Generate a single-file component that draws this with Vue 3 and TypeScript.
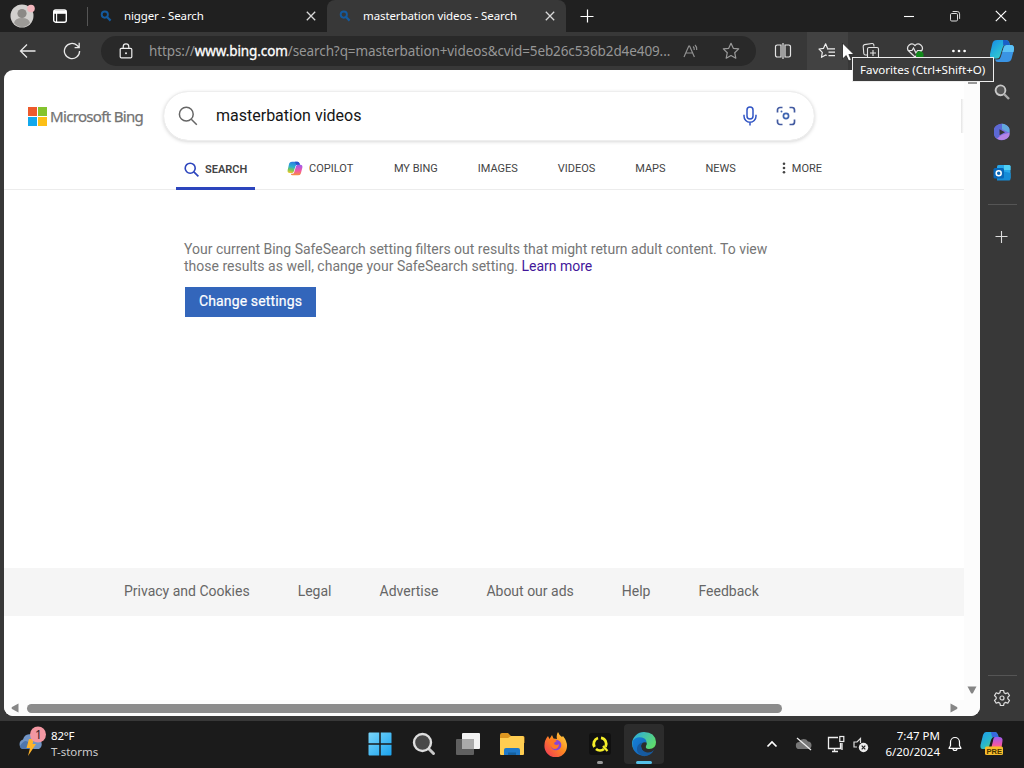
<script setup lang="ts">
interface NavItem { label: string }
const nav: NavItem[] = [
  { label: 'MY BING' },
  { label: 'IMAGES' },
  { label: 'VIDEOS' },
  { label: 'MAPS' },
  { label: 'NEWS' },
]
const footer: string[] = ['Privacy and Cookies', 'Legal', 'Advertise', 'About our ads', 'Help', 'Feedback']
</script>

<template>
  <div class="desktop">
    <svg width="0" height="0" class="defs">
      <defs>
        <linearGradient id="copA" x1="0" y1="0" x2="1" y2="1"><stop offset="0" stop-color="#1a9bf0" /><stop offset=".5" stop-color="#2bb8c8" /><stop offset="1" stop-color="#8bd93a" /></linearGradient>
        <linearGradient id="copL" x1=".5" y1="0" x2=".3" y2="1"><stop offset="0" stop-color="#2a7be0" /><stop offset=".45" stop-color="#2bb0d0" /><stop offset=".75" stop-color="#7cc850" /><stop offset="1" stop-color="#f0c830" /></linearGradient>
        <linearGradient id="copB" x1="0" y1="0" x2="0" y2="1"><stop offset="0" stop-color="#9a5cf0" /><stop offset=".55" stop-color="#f056a8" /><stop offset="1" stop-color="#f8913c" /></linearGradient>
        <linearGradient id="copC" x1="0" y1="0" x2="1" y2="1"><stop offset="0" stop-color="#1688e8" /><stop offset=".5" stop-color="#28b8d8" /><stop offset="1" stop-color="#4ad8b8" /></linearGradient>
        <linearGradient id="winG" x1="0" y1="0" x2="1" y2="1"><stop offset="0" stop-color="#7ad6fb" /><stop offset="1" stop-color="#1aa3ee" /></linearGradient>
        <linearGradient id="foxG" x1="1" y1="0" x2="0" y2="1"><stop offset="0" stop-color="#ffe14a" /><stop offset=".45" stop-color="#ff8a20" /><stop offset="1" stop-color="#f0305e" /></linearGradient>
        <linearGradient id="edgeG" x1="0" y1="0" x2="1" y2=".6"><stop offset="0" stop-color="#28a8e8" /><stop offset="1" stop-color="#5fdc6c" /></linearGradient>
        <linearGradient id="edgeB" x1="0" y1="0" x2="1" y2="1"><stop offset="0" stop-color="#1580d8" /><stop offset="1" stop-color="#1560b0" /></linearGradient>
      </defs>
    </svg>

    <header class="titlebar">
      <svg class="avatar" width="26" height="26" viewBox="0 0 26 26"><circle cx="13" cy="13" r="11.5" fill="#d2d0ce" /><circle cx="13" cy="10.5" r="4.6" fill="#8b8986" /><path d="M5 20q1-5 8-5t8 5q-3 4-8 4t-8-4z" fill="#9c9a97" /><circle cx="22" cy="5.500" r="3.800" fill="#f3b6bd" /></svg>
      <svg class="tabmenu" width="16" height="16" viewBox="0 0 16 16"><rect x="1.700" y="2" width="12.600" height="12.200" rx="2" fill="none" stroke="#fff" stroke-width="1.400" /><path d="M2 2.600h12v3.200H2z" fill="#fff" /><path d="M4.600 5v9" stroke="#fff" stroke-width="1.100" /></svg>
      <i class="divider"></i>
      <div class="tab first">
        <svg width="12" height="12" viewBox="0 0 12 12"><circle cx="4.800" cy="4.600" r="3.100" fill="none" stroke="#145a9e" stroke-width="1.900" /><path d="M7 7l3.600 3.600" stroke="#145a9e" stroke-width="2.200" /></svg>
        <span class="tabtext">nigger - Search</span>
        <svg width="10" height="10" viewBox="0 0 10 10"><path d="M.8.8l8.400 8.400M9.200.8L.8 9.200" stroke="#d8d8d8" stroke-width="1.300" /></svg>
      </div>
      <div class="tab active">
        <svg width="12" height="12" viewBox="0 0 12 12"><circle cx="4.800" cy="4.600" r="3.100" fill="none" stroke="#145a9e" stroke-width="1.900" /><path d="M7 7l3.600 3.600" stroke="#145a9e" stroke-width="2.200" /></svg>
        <span class="tabtext t2">masterbation videos - Search</span>
        <svg width="10" height="10" viewBox="0 0 10 10"><path d="M.8.8l8.400 8.400M9.200.8L.8 9.200" stroke="#d8d8d8" stroke-width="1.300" /></svg>
      </div>
      <svg class="newtab" width="14" height="14" viewBox="0 0 14 14"><path d="M7.500 .5v13M.5 7.500h13" stroke="#fff" stroke-width="1.200" /></svg>
      <div class="winbtns">
        <svg width="12" height="12" viewBox="0 0 12 12"><path d="M1 6.500h10" stroke="#fff" stroke-width="1.100" /></svg>
        <svg width="12" height="12" viewBox="0 0 12 12"><rect x="1.500" y="3.500" width="7" height="7.500" rx="1.200" fill="none" stroke="#ddd" /><path d="M3.600 1.500h4.600a2.400 2.400 0 0 1 2.400 2.400v5" fill="none" stroke="#ddd" /></svg>
        <svg width="12" height="12" viewBox="0 0 12 12"><path d="M.8.8l10.400 10.400M11.200.8L.8 11.200" stroke="#fff" stroke-width="1.200" /></svg>
      </div>
    </header>

    <div class="toolbar">
      <svg class="back" width="18" height="16" viewBox="0 0 18 16"><path d="M16.500 8H2M8 1.500L1.500 8 8 14.500" fill="none" stroke="#e8e8e8" stroke-width="1.300" /></svg>
      <svg class="reload" width="18" height="18" viewBox="0 0 18 18"><path d="M16.600 9A7.600 7.600 0 1 1 14.200 3.500L16 5.300M16.200.8v4.800h-4.600" fill="none" stroke="#e8e8e8" stroke-width="1.300" /></svg>
      <div class="address">
        <svg class="lock" width="14" height="16" viewBox="0 0 14 16"><rect x="1.200" y="5.300" width="11.600" height="9.600" rx="1.200" fill="none" stroke="#eee" stroke-width="1.200" /><path d="M4.200 5V3.700a2.800 2.800 0 0 1 5.600 0V5" fill="none" stroke="#eee" stroke-width="1.200" /><circle cx="7" cy="10.200" r="1" fill="#eee" /></svg>
        <span class="url">https://<b>www.bing.com</b>/search?q=masterbation+videos&amp;cvid=5eb26c536b2d4e409...</span>
        <svg class="read" width="17" height="16" viewBox="0 0 17 16"><path d="M1 14L5.800 3h.8l4.800 11M2.700 10h7" fill="none" stroke="#919191" stroke-width="1.200" /><path d="M10 3.500q1.500 1 1.200 3.500M12 2q2.100 1.800 1.700 5" fill="none" stroke="#919191" stroke-width="1.200" /></svg>
        <svg class="star" width="18" height="18" viewBox="0 0 18 18"><path d="M9 1.300l2.300 5 5.400.6-4 3.800 1.100 5.500L9 13.500l-4.800 2.700 1.100-5.500-4-3.800 5.400-.6z" fill="none" stroke="#9a9a9a" stroke-width="1.200" stroke-linejoin="round" /></svg>
      </div>
      <div class="tools">
        <span><svg width="18" height="18" viewBox="0 0 18 18"><path d="M7 3H3.200A1.700 1.700 0 0 0 1.500 4.700v8.600A1.700 1.700 0 0 0 3.200 15H7zM11 3h3.800a1.700 1.700 0 0 1 1.700 1.700v8.600a1.700 1.700 0 0 1-1.700 1.700H11zM9 1v16" fill="none" stroke="#e4e4e4" stroke-width="1.200" /></svg></span>
        <span class="hover"><svg width="18" height="18" viewBox="0 0 18 18"><path d="M9.600 6.600L7.600 1.800 5.400 6.400 1 7l3.300 3.300-.8 5 4.200-2.400 1 .7" fill="none" stroke="#eee" stroke-width="1.200" stroke-linejoin="round" /><path d="M9 6.800h8M10.500 10.200h6.500M10.500 13.600h6.500" stroke="#eee" stroke-width="1.200" /></svg></span>
        <span><svg width="18" height="18" viewBox="0 0 18 18"><path d="M5 13H3.500Q2 13 1.800 11.500L1.200 4.500Q1 3 2.500 2.600L10 1.500q1.500-.2 1.800 1.200L12 4.500" fill="none" stroke="#e4e4e4" stroke-width="1.100" /><rect x="5.500" y="5.500" width="11" height="11" rx="1.500" fill="none" stroke="#e4e4e4" stroke-width="1.100" /><path d="M11 8v6M8 11h6" stroke="#e4e4e4" stroke-width="1.100" /></svg></span>
        <span><svg width="18" height="18" viewBox="0 0 18 18"><path d="M9 15L2.500 8.800A4.200 4.200 0 0 1 9 3.500a4.200 4.200 0 0 1 6.500 5.300zM1.500 8.500H6L7.500 6l2.500 5 1.500-2.500h5" fill="none" stroke="#e4e4e4" stroke-width="1.200" /><circle cx="13.800" cy="13" r="3.800" fill="#128a1c" /></svg></span>
        <span><svg width="16" height="4" viewBox="0 0 16 4"><circle cx="2.400" cy="2" r="1.350" fill="#fff" /><circle cx="8" cy="2" r="1.350" fill="#fff" /><circle cx="13.600" cy="2" r="1.350" fill="#fff" /></svg></span>
      </div>
      <svg class="copilot" width="26" height="24" viewBox="0 0 26 24"><path d="M8 1h9q2.500 0 3.200 2.500L21 6h-4.500q-2 0-2.800 2.500L11 17q-.8 2.500-3 2.500H4Q.5 19.500 1 15L3.500 4Q4.500 1 8 1z" fill="url(#copC)" /><path d="M14 1h3q2.500 0 3.200 2.500L21 6h-4.500q-1.500 0-2.300 1z" fill="#1a5fc8" /><path d="M18 23H9q-2.500 0-3-2.500h3q2 0 2.700-2.500l3-9.500q.8-2.500 3-2.500H22q3.500 0 3 4.500L22.500 20Q21.500 23 18 23z" fill="#3a94e4" /><path d="M17.700 6H22q3.500 0 3 4.500l-.5 2.500H13.300l1.400-4.500Q15.300 6 17.700 6z" fill="#5bc1f5" /></svg>
    </div>

    <div class="body">
      <main class="page">
        <div class="content">
          <div class="searchrow">
            <svg width="19" height="19" viewBox="0 0 19 19"><path d="M0 0h9v9H0z" fill="#ed5a2c" /><path d="M10 0h9v9h-9z" fill="#84c32e" /><path d="M0 10h9v9H0z" fill="#12a8ec" /><path d="M10 10h9v9h-9z" fill="#fcbf17" /></svg>
            <span class="brand">Microsoft Bing</span>
            <div class="searchbox">
              <svg width="20" height="20" viewBox="0 0 20 20"><circle cx="8.300" cy="8.200" r="6.900" fill="none" stroke="#666" stroke-width="1.500" /><path d="M13.300 13.200l5.500 5.500" stroke="#666" stroke-width="1.500" /></svg>
              <span class="query">masterbation videos</span>
              <svg class="mic" width="16" height="20" viewBox="0 0 16 20"><rect x="5" y="1" width="6" height="12" rx="3" fill="none" stroke="#3155c4" stroke-width="1.500" /><path d="M2 8.800v1.400a6 6 0 0 0 12 0V8.800M8 16.300V19.500" fill="none" stroke="#3155c4" stroke-width="1.500" /></svg>
              <svg width="20" height="20" viewBox="0 0 20 20"><path d="M1.500 6.500V4A2.500 2.500 0 0 1 4 1.500h2.500M13.500 1.500H16A2.500 2.500 0 0 1 18.500 4v2.500M18.500 13.500V16a2.500 2.500 0 0 1-2.500 2.500h-2.500M6.500 18.500H4A2.500 2.500 0 0 1 1.500 16v-2.500" fill="none" stroke="#425aa0" stroke-width="1.700" /><circle cx="10" cy="10" r="2.600" fill="none" stroke="#3e64b0" stroke-width="1.700" /><circle cx="5.500" cy="5.500" r="1" fill="#3e64b0" /></svg>
            </div>
            <i class="edgebox"></i>
          </div>
          <nav class="nav">
            <div class="navactive">
              <svg width="15" height="15" viewBox="0 0 15 15"><circle cx="6.200" cy="6.200" r="5" fill="none" stroke="#2c45bd" stroke-width="1.600" /><path d="M9.800 9.800l4.600 4.600" stroke="#2c45bd" stroke-width="1.700" /></svg>
              <span>SEARCH</span>
            </div>
            <div class="navcop">
              <svg width="16" height="15" viewBox="0 0 26 24"><path d="M8 1h9q2.500 0 3.200 2.500L21 6h-4.500q-2 0-2.800 2.500L11 17q-.8 2.500-3 2.500H4Q.5 19.500 1 15L3.500 4Q4.500 1 8 1z" fill="url(#copL)" /><path d="M18 23H9q-2.500 0-3-2.500h3q2 0 2.700-2.500l3-9.500q.8-2.500 3-2.500H22q3.500 0 3 4.500L22.500 20Q21.500 23 18 23z" fill="url(#copB)" /><path d="M13 1h4q2.500 0 3.200 2.500L21 6h-6z" fill="#2850cc" /></svg>
              <span>COPILOT</span>
            </div>
            <span v-for="n in nav" :key="n.label" class="navitem">{{ n.label }}</span>
            <svg class="kebab" width="4" height="12" viewBox="0 0 4 12"><circle cx="2" cy="1.800" r="1.300" fill="#444" /><circle cx="2" cy="6" r="1.300" fill="#444" /><circle cx="2" cy="10.200" r="1.300" fill="#444" /></svg>
            <span class="more">MORE</span>
          </nav>
          <section class="notice">
            <p>Your current Bing SafeSearch setting filters out results that might return adult content. To view<br>those results as well, change your SafeSearch setting. <a>Learn more</a></p>
            <button>Change settings</button>
          </section>
          <footer class="foot"><span v-for="f in footer" :key="f">{{ f }}</span></footer>
        </div>
        <div class="vscroll">
          <i class="vtop"></i>
          <svg width="10" height="8" viewBox="0 0 10 8"><path d="M.5.500h9L6 7q-1 1-2 0z" fill="#858585" /></svg>
        </div>
        <div class="hscroll">
          <svg width="8" height="10" viewBox="0 0 8 10"><path d="M7.500.500v9L1 6Q0 5 1 4z" fill="#858585" /></svg>
          <i></i>
          <svg width="8" height="10" viewBox="0 0 8 10"><path d="M.5.500v9L7 6q1-1 0-2z" fill="#858585" /></svg>
        </div>
      </main>
      <aside class="side">
        <svg class="s1" width="16" height="16" viewBox="0 0 16 16"><circle cx="6.500" cy="6.300" r="4.900" fill="#555" stroke="#c8c8c8" stroke-width="1.900" /><path d="M10 10l5 5" stroke="#aaa" stroke-width="2.400" /></svg>
        <svg class="s2" width="18" height="18" viewBox="0 0 18 18"><path d="M9 .8q2 0 4 1.200 3.500 2 3.500 5v4q0 3-3.500 5-4.500 2.400-9 0-3-2-3-5V7q0-3 3.500-5Q7 .8 9 .8z" fill="#7a6ee0" /><path d="M9 .8q2 0 4 1.200 3.500 2 3.500 5v3L9 6z" fill="#62a8dc" /><path d="M1 7q0-3 3.500-5Q7 .8 9 .8V7L6 9v7.300Q1 14 1 11z" fill="#5c68d4" /><path d="M4 15.500l5-3.800 7.500-2V11q0 3-3.500 5-4.500 2.400-9-.500z" fill="#b584e6" /><path d="M6.500 6.200l5.500 3-5.500 3z" fill="#333" /></svg>
        <svg class="s3" width="18" height="18" viewBox="0 0 18 18"><rect x="4" y="1" width="13.500" height="14" rx="1.500" fill="#28a8ea" /><path d="M4 6l13.500 3v6q0 1.500-1.500 1.500H4z" fill="#148cd8" /><path d="M11 1h5q1.500 0 1.500 1.500V6H11z" fill="#50d0f5" /><rect x=".5" y="4" width="10.500" height="10.500" rx="1.500" fill="#0867b8" /><circle cx="5.700" cy="9.200" r="2.500" fill="none" stroke="#fff" stroke-width="1.500" /></svg>
        <i class="line l1"></i>
        <svg class="plus" width="14" height="14" viewBox="0 0 14 14"><path d="M6.500 1v12M.500 6.500h12" stroke="#ddd" stroke-width="1.100" /></svg>
        <i class="line l2"></i>
        <svg width="18" height="18" viewBox="0 0 18 18"><path d="M7.400 1h3.200l.5 2.300 1.500.8 2.200-.8 1.700 2.800-1.700 1.600v1.600l1.700 1.600-1.700 2.800-2.200-.8-1.500.8-.5 2.300H7.400l-.5-2.300-1.500-.8-2.200.8-1.700-2.800 1.700-1.600V7.700L1.500 6.100l1.700-2.800 2.200.8 1.500-.8z" transform="translate(0 .5)" fill="none" stroke="#ddd" stroke-width="1.200" stroke-linejoin="round" /><circle cx="9" cy="9" r="2" fill="none" stroke="#ddd" stroke-width="1.200" /></svg>
      </aside>
    </div>

    <div class="taskbar">
      <svg class="weather" width="28" height="32" viewBox="0 0 28 32"><path d="M5 23a5 5 0 0 1 0-9.500 7 7 0 0 1 13-1.500 6 6 0 0 1 3 11z" fill="#7295c6" /><path d="M2 20q5-8 9-3l5 6H5q-3 0-3-3z" fill="#4f76ad" /><path d="M11 13h5l-1.500 5H18l-8 12 2-8H8.500z" fill="#ffb42b" /><circle cx="20" cy="8.500" r="8" fill="#f397a2" /><text x="17" y="13" font-family="Noto Sans" font-size="12" fill="#332226">1</text></svg>
      <div class="wtext"><span class="temp">82°F</span><span class="cond">T-storms</span></div>
      <div class="apps">
        <span><svg width="24" height="24" viewBox="0 0 24 24"><path d="M1.500.500H11.500V11.500H.500V1.500q0-1 1-1zM12.500 .5h10q1 0 1 1V11.500h-11zM.5 12.500h11v11h-10q-1 0-1-1zM12.500 12.500h11v10q0 1-1 1h-10z" fill="url(#winG)" /><path d="M12 0v24M0 12h24" stroke="#1b1b1b" /></svg></span>
        <span><svg width="24" height="24" viewBox="0 0 24 24"><path d="M16 16l5.500 5.500" stroke="#c8c8c8" stroke-width="3" stroke-linecap="round" /><circle cx="10.500" cy="10.500" r="8.500" fill="#484848" stroke="#dedede" stroke-width="2.400" /></svg></span>
        <span><svg width="26" height="24" viewBox="0 0 26 24"><rect x="7" y="1" width="18" height="16" rx="1" fill="#f2f2f2" /><rect x="1" y="7" width="18" height="16" rx="1" fill="#606060" /><path d="M7 7h12v10H7z" fill="#aaa" /></svg></span>
        <span><svg width="26" height="24" viewBox="0 0 26 24"><path d="M1 3q0-2 2-2h6l3 3h12q1.500 0 1.500 1.500V11H1z" fill="#dd9620" /><path d="M1 6h8l3-2h11.500Q25 4 25 6v16q0 1-1 1H2q-1 0-1-1z" fill="#ffcd51" /><path d="M5 23v-5q0-2 2-2h12q2 0 2 2v5z" fill="#1f78c8" /><path d="M9 23v-2.500h8V23z" fill="#15609f" /></svg></span>
        <span><svg width="26" height="26" viewBox="0 0 26 26"><path d="M15 1q1 3 4 5l1-1q4 5 4 10a11.300 11.300 0 0 1-22.600 0Q1.400 9 5 5l1.500 3L9 4l1.500 3.500L14 8q-1-4 1-7z" fill="url(#foxG)" /><circle cx="13" cy="14" r="5.300" fill="#8745d8" /><path d="M6 9q5-2 8 1-3 1-3 3 3 2 5 0 0 5-5 5-4-1-5-9z" fill="#ff7726" /></svg></span>
        <span class="running"><svg width="24" height="24" viewBox="0 0 24 24"><rect x="1" y="1" width="22" height="22" rx="3" fill="#101010" /><path d="M6.500 15A6.200 6.200 0 0 1 10 6M13 5.800a6.200 6.200 0 0 1 4.500 9M16 17a6.200 6.200 0 0 1-8 0" fill="none" stroke="#f5ee28" stroke-width="2.800" /><path d="M15 14l4.500 5" stroke="#f5ee28" stroke-width="2.200" /></svg><i class="dot"></i></span>
        <span class="current"><svg width="26" height="26" viewBox="0 0 26 26"><path d="M1 12A12 12 0 0 1 13 1q11 0 12 10 0 7-7 7-4 0-3-3 2-3-1-5-5-2-9 2-3 3-2 7-2-3-2-7z" fill="url(#edgeG)" /><path d="M1.500 10Q5 5 11 6.500q4.500 1 4.500 5-5-1-5.500 3.500 0 7 9 8-4 2.500-8.500 1.500Q.5 22 1.500 10z" fill="url(#edgeB)" /><path d="M10 15q0 5 6 6.500 4 .5 7-2.500-3 6-10 6.200Q5 23 6 17q1-5 6-5.500-2 1-2 3.500z" fill="#165a9f" /></svg><i class="bar"></i></span>
      </div>
      <div class="tray">
        <svg class="chev" width="12" height="8" viewBox="0 0 12 8"><path d="M1.500 6.500L6 2l4.500 4.500" fill="none" stroke="#fff" stroke-width="1.700" /></svg>
        <svg class="cloud" width="18" height="14" viewBox="0 0 18 14"><path d="M4.500 12a3.500 3.500 0 0 1-.3-7A5 5 0 0 1 13 4.500a3.800 3.800 0 0 1 .5 7.500z" fill="#777" /><path d="M2 1l14 12" stroke="#eee" stroke-width="1.300" /></svg>
        <svg class="net" width="18" height="18" viewBox="0 0 18 18"><path d="M11 2.500H1.500v11H13.500V8M5 16.500h6M7.500 14v2.500M15 8v7" fill="none" stroke="#eee" stroke-width="1.300" /><rect x="12.800" y="1.500" width="4" height="5" fill="none" stroke="#eee" stroke-width="1.200" /></svg>
        <svg class="vol" width="16" height="16" viewBox="0 0 16 16"><path d="M7.500 6V1.500L4 5H1v5h3" fill="none" stroke="#ddd" stroke-width="1.200" /><circle cx="10.500" cy="10.500" r="4.700" fill="#eee" /><path d="M8.700 8.700l3.600 3.600M12.300 8.700l-3.600 3.600" stroke="#222" stroke-width="1.200" /></svg>
        <div class="clock"><span class="time">7:47 PM</span><span class="date">6/20/2024</span></div>
        <svg class="bell" width="14" height="16" viewBox="0 0 14 16"><path d="M1 12.300L2.500 9.500V6a4.500 4.500 0 0 1 9 0v3.500l1.500 2.800zM5 12.500a2 2 0 0 0 4 0" fill="none" stroke="#fff" stroke-width="1.200" stroke-linejoin="round" /></svg>
        <svg class="pre" width="26" height="25" viewBox="0 0 26 25"><path d="M7 1h9q2 0 3 3l.5 2H15q-2 0-3 3l-2 7q-1 2-3 2H3.500Q1 18 1.500 14L4 4q1-3 3-3z" fill="url(#copA)" /><path d="M16 6h4q4 0 3.500 4L22 20H8l4-2 2-8q.5-4 2-4z" fill="url(#copB)" /><path d="M12 1h4q2 0 3 3l.5 2H13z" fill="#3669de" /><rect x="6" y="15.500" width="18" height="8.500" rx="1.500" fill="#f7bc2c" /><text x="7.500" y="22.500" font-family="Liberation Sans" font-weight="700" font-size="7.500" fill="#463300">PRE</text></svg>
      </div>
    </div>

    <div class="tooltip">Favorites (Ctrl+Shift+O)</div>
    <svg class="cursor" width="14" height="20" viewBox="0 0 14 20"><path d="M1.500 1v16l3.700-3.400L7.700 19l2.700-1.200-2.500-5.300H13z" fill="#fff" stroke="#222" stroke-width=".8" /></svg>
  </div>
</template>

<style>
body { margin: 0; background: #1b1b1b; overflow: hidden; }
</style>

<style scoped>
* { box-sizing: border-box; }
svg { display: block; flex: none; }
.desktop { position: relative; width: 1024px; height: 768px; overflow: hidden; display: flex; flex-direction: column; background: #383838; font-family: "Noto Sans", sans-serif; color: #fff; }
.defs { position: absolute; }
span { white-space: nowrap; }

.titlebar { height: 32px; flex: none; background: #202020; display: flex; align-items: center; }
.avatar { margin-left: 9px; }
.tabmenu { margin-left: 17px; }
.divider { width: 1px; height: 19px; background: #555; margin-left: 19px; }
.tab { display: flex; align-items: center; height: 32px; }
.tab.first { width: 239px; padding: 0 11px 0 12px; }
.tab.active { width: 239px; padding: 0 11px 0 12px; background: #383838; border-radius: 8px 8px 0 0; }
.tabtext { flex: 1; font-size: 11.5px; line-height: 16px; margin-left: 12px; letter-spacing: -.12px; }
.tabtext.t2 { letter-spacing: -.1px; }
.newtab { margin-left: 14px; }
.winbtns { margin-left: auto; display: flex; gap: 34px; padding-right: 17px; }

.toolbar { height: 38px; flex: none; display: flex; align-items: center; }
.back { margin-left: 19px; }
.reload { margin-left: 26px; }
.address { width: 655px; height: 30px; margin-left: 20px; border-radius: 15px; background: #292929; display: flex; align-items: center; }
.lock { margin-left: 18px; }
.url { width: 522px; margin-left: 16px; font-size: 13.5px; color: #969696; letter-spacing: -.1px; }
.url b { font-weight: 400; color: #fff; -webkit-text-stroke: .3px #fff; }
.read { margin-left: 12px; }
.star { margin-left: 22px; }
.tools { display: flex; margin-left: 5px; }
.tools span { width: 44px; height: 38px; display: grid; place-items: center; }
.tools .hover { background: linear-gradient(90deg, transparent 2px, #424242 2px, #424242 43px, transparent 43px); }
.copilot { margin-left: 8px; }

.body { height: 651px; flex: none; display: flex; }
.page { width: 976px; height: 646px; margin-left: 4px; background: #fff; border-radius: 9px; overflow: hidden; display: grid; grid-template: 630px 16px / 960px 16px; font-family: Roboto, sans-serif; }
.content { display: flex; flex-direction: column; overflow: hidden; }
.searchrow { height: 50px; margin-top: 21px; display: flex; align-items: center; padding-left: 24px; flex: none; }
.brand { font-family: "Noto Sans", sans-serif; font-size: 15px; color: #737373; margin-left: 3px; width: 95px; letter-spacing: -.67px; -webkit-text-stroke: .25px #737373; }
.searchbox { width: 650px; height: 48px; margin-left: 19px; border-radius: 24px; box-shadow: 0 0 0 1px #eee, 0 1px 4px #c4c4c4; display: flex; align-items: center; padding: 0 18px 0 14px; }
.query { flex: 1; margin-left: 18px; padding-bottom: 2px; font-size: 16px; color: #151515; }
.mic { margin-right: 18px; }
.edgebox { width: 3px; height: 34px; margin-left: auto; background: linear-gradient(90deg, #e4e4e4, #fff); }
.nav { height: 49px; flex: none; display: flex; align-items: center; padding: 6px 0 0 172px; border-bottom: 1px solid #ececec; font-size: 11px; color: #444; }
.navactive { width: 79px; height: 43px; margin-bottom: -1px; align-self: flex-end; flex: none; display: flex; align-items: center; gap: 6px; padding: 4px 0 0 8px; border-bottom: 3px solid #2c45bd; font-weight: 600; }
.navcop { display: flex; align-items: center; gap: 6px; margin-left: 32px; width: 67px; }
.navitem { margin-left: 39.9px; }
.kebab { margin-left: 46px; }
.more { margin-left: 6px; }
.notice { height: 378px; flex: none; padding: 51px 0 0 180px; }
.notice p { margin: 0; font-size: 14px; line-height: 17px; color: #767676; white-space: nowrap; }
.notice a { color: #43179a; }
.notice button { margin: 12px 0 0 1px; display: block; width: 131px; height: 30px; border: 0; padding: 0 0 2px; background: #3366bb; color: #fff; font: 400 14px Roboto, sans-serif; letter-spacing: .15px; -webkit-text-stroke: .2px #fff; }
.foot { height: 48px; flex: none; background: #f5f5f5; display: flex; align-items: center; gap: 48px; padding-left: 120px; font-size: 14px; color: #666; padding-bottom: 3px; }
.vscroll { background: #fcfcfc; display: flex; flex-direction: column; align-items: center; justify-content: space-between; padding: 11px 0 6px; }
.vtop { width: 9px; height: 3px; background: #999; }
.hscroll { grid-column: 1 / 3; display: flex; align-items: center; padding-left: 7px; background: #fcfcfc; }
.hscroll i { width: 755px; height: 9px; border-radius: 5px; background: #8b8b8b; margin: 0 168px 0 8px; }
.side { width: 44px; display: flex; flex-direction: column; align-items: center; }
.s1 { margin-top: 14px; }
.s2 { margin-top: 23px; }
.s3 { margin-top: 23px; }
.line { width: 29px; height: 1px; background: #555; }
.l1 { margin-top: 22px; }
.plus { margin-top: 25px; }
.l2 { margin: 431px 0 13px; }

.taskbar { height: 47px; flex: none; background: #1b1b1b; display: flex; align-items: center; padding-bottom: 2px; }
.weather { margin: -4px 0 0 18px; }
.wtext { width: 60px; margin-left: 5px; display: flex; flex-direction: column; font-size: 11.5px; line-height: 16px; }
.temp { letter-spacing: -.2px; }
.cond { color: #ccc; }
.apps { display: flex; margin-left: 249px; gap: 4px; }
.apps span { position: relative; width: 40px; height: 40px; display: grid; place-items: center; border-radius: 4px; }
.current { background: #2c2c2c; }
.apps i { position: absolute; bottom: 0; border-radius: 2px; height: 3px; }
.dot { width: 6px; background: #999; }
.bar { width: 16px; background: #55c0e8; }
.tray { display: flex; align-items: center; margin-left: 102px; }
.cloud { margin-left: 17px; }
.net { margin-left: 14px; }
.vol { margin-left: 8px; margin-top: 3px; }
.clock { width: 71px; display: flex; flex-direction: column; align-items: flex-end; font-size: 11.5px; line-height: 16px; }
.time { letter-spacing: 0; }
.date { letter-spacing: 0; }
.bell { margin-left: 8px; }
.pre { margin-left: 17px; }
.tooltip { position: absolute; left: 852px; top: 57px; width: 142px; height: 25px; border: 1px solid #eee; background: #3b3b3b; padding-left: 7px; font-size: 11.6px; line-height: 23px; white-space: nowrap; letter-spacing: -.02px; }
.cursor { position: absolute; left: 841px; top: 42px; }
</style>
